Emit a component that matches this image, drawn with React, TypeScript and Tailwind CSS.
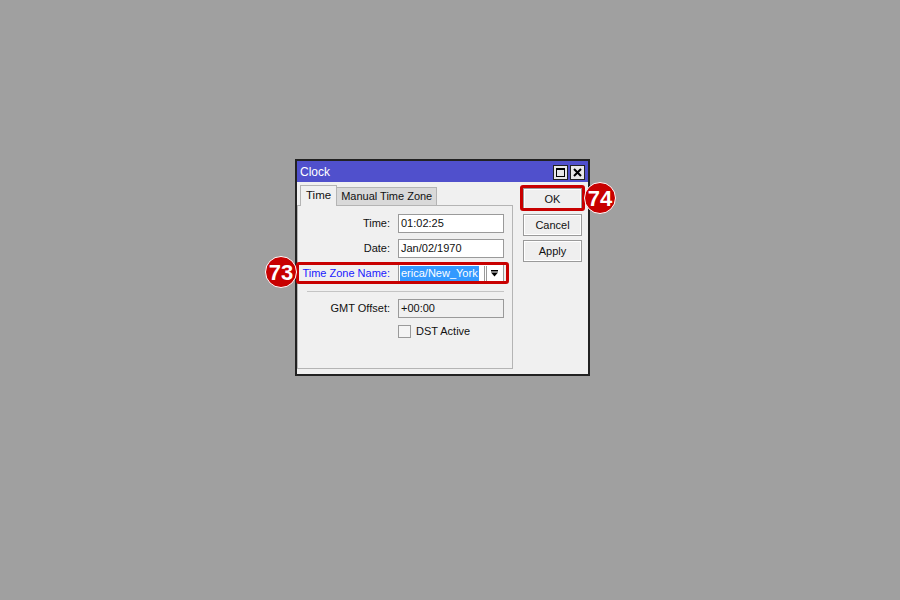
export default function App() {
  const rows = [
    { label: "Time:", value: "01:02:25" },
    { label: "Date:", value: "Jan/02/1970" },
  ];

  return (
    <div className="relative w-[900px] h-[600px] bg-[#a0a0a0] pt-[159px] pl-[295px] font-['Liberation_Sans',Arial,sans-serif] text-[11px] text-[#111]">
      {/* ── Window ── */}
      <div className="flex flex-col w-[295px] h-[217px] border-2 border-[#222] bg-[#f0f0f0]">
        {/* title bar */}
        <div className="flex items-center justify-between h-[21px] pl-[3px] pr-[3px] pt-[1px] bg-[#5050cc] text-white text-[12px]">
          <span className="leading-none">Clock</span>
          <div className="flex gap-[2px]">
            <div className="flex items-center justify-center w-[15px] h-[15px] border border-[#222] bg-[#e8e8e8]">
              <div className="w-[9px] h-[9px] border border-black border-t-2" />
            </div>
            <div className="flex items-center justify-center w-[15px] h-[15px] border border-[#222] bg-[#e8e8e8]">
              <svg width="9" height="9" viewBox="0 0 9 9">
                <path d="M1 1L8 8M8 1L1 8" stroke="black" strokeWidth="2" />
              </svg>
            </div>
          </div>
        </div>

        {/* body */}
        <div className="flex flex-1">
          <div className="flex flex-col w-[216px]">
            {/* tabs */}
            <div className="flex items-end h-[23px] pl-[3px]">
              <div className="relative z-10 flex items-center h-[21px] px-[5px] -mb-px border border-b-0 border-[#b4b4b4] bg-[#f0f0f0] text-[11.5px]">
                Time
              </div>
              <div className="flex items-center h-[18px] px-[4px] border-t border-r border-[#b4b4b4] bg-[#d9d9d9] whitespace-nowrap">
                Manual Time Zone
              </div>
            </div>

            {/* panel */}
            <div className="flex flex-col h-[164px] border border-[#b4b4b4] pt-[8px]">
              <div className="flex flex-col gap-[6px]">
                {rows.map((r) => (
                  <div key={r.label} className="flex items-center h-[19px]">
                    <span className="w-[93px] pr-[1px] text-right whitespace-nowrap">{r.label}</span>
                    <div className="flex items-center ml-[7px] w-[106px] h-[19px] px-[2px] border border-[#9a9a9a] bg-white">
                      {r.value}
                    </div>
                  </div>
                ))}
                <div className="flex items-center h-[19px]">
                  <span className="w-[93px] pr-[1px] text-right whitespace-nowrap text-[#1a1aff]">Time Zone Name:</span>
                  <div className="flex items-center ml-[7px] w-[106px] h-[19px] border border-[#9a9a9a] bg-white">
                    <span className="ml-[1px] h-[15px] px-[1px] leading-[15px] whitespace-nowrap bg-[#3399ff] text-white">
                      erica/New_York
                    </span>
                    <div className="flex items-center justify-center ml-auto mr-[1px] w-[18px] h-[15px] border-l-[3px] border-double border-[#9a9a9a]">
                      <svg width="9" height="9" viewBox="0 0 9 9">
                        <rect x="1" y="1" width="7" height="1.5" fill="black" />
                        <path d="M1 3.5H8L4.5 7.5Z" fill="black" />
                      </svg>
                    </div>
                  </div>
                </div>
              </div>

              <div className="ml-[9px] mt-[8px] w-[197px] h-px bg-[#c4c4c4]" />

              <div className="flex items-center h-[19px] mt-[7px]">
                <span className="w-[93px] pr-[1px] text-right whitespace-nowrap">GMT Offset:</span>
                <div className="flex items-center ml-[7px] w-[106px] h-[19px] px-[2px] border border-[#9a9a9a] bg-[#f0f0f0]">
                  +00:00
                </div>
              </div>

              <div className="flex items-center mt-[5px] ml-[100px]">
                <div className="w-[13px] h-[13px] border border-[#9a9a9a] bg-[#f4f4f4]" />
                <span className="ml-[5px]">DST Active</span>
              </div>
            </div>
          </div>

          {/* buttons */}
          <div className="flex flex-col gap-[4px] ml-[10px] mt-[6px]">
            {["OK", "Cancel", "Apply"].map((b) => (
              <div
                key={b}
                className="flex items-center justify-center w-[59px] h-[22px] border border-[#9a9a9a] bg-[#efefef] shadow-[inset_0_0_0_1px_#fff]"
              >
                {b}
              </div>
            ))}
          </div>
        </div>
      </div>

      {/* ── Highlights ── */}
      <div className="absolute left-[296px] top-[262px] w-[213px] h-[22px] border-[3px] border-[#c80000] rounded-[3px]" />
      <div className="absolute left-[520px] top-[185px] w-[65px] h-[26px] border-[3px] border-[#c80000] rounded-[3px]" />

      <div className="absolute left-[265px] top-[256px] flex items-center justify-center w-[32px] h-[32px] rounded-full bg-[#c80000] border border-white text-white font-bold text-[22px]">
        73
      </div>
      <div className="absolute left-[584px] top-[182px] flex items-center justify-center w-[32px] h-[32px] rounded-full bg-[#c80000] border border-white text-white font-bold text-[22px]">
        74
      </div>
    </div>
  );
}
